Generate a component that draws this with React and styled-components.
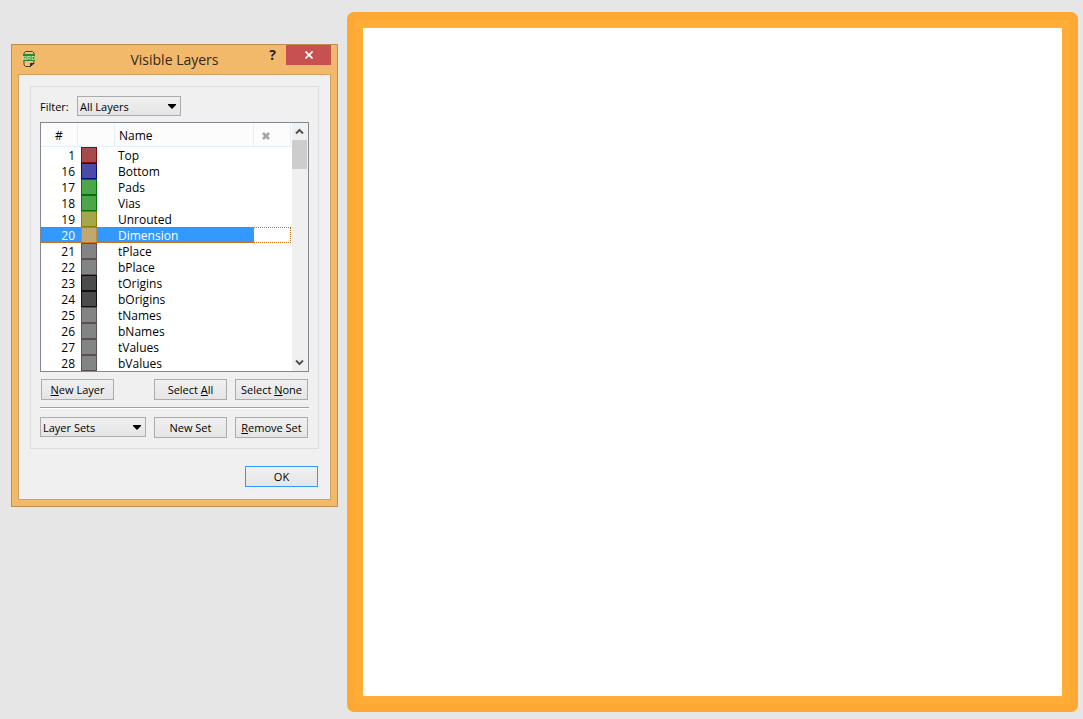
import React, { useState } from "react";
import styled, { createGlobalStyle, css } from "styled-components";

const GlobalStyle = createGlobalStyle`
  *, *::before, *::after { box-sizing: border-box; }
  body {
    margin: 0;
    background: #e6e6e6;
    color: #000;
    font: 11px/16px "Open Sans", "Noto Sans", sans-serif;
  }
`;

const Page = styled.main`
  display: flex;
  gap: 9px;
  min-height: 100vh;
  padding: 12px 5px 7px 11px;
`;

const Dialog = styled.section`
  display: flex;
  flex-direction: column;
  flex: 0 0 327px;
  align-self: flex-start;
  margin-top: 32px;
  border: 1px solid #bd9050;
  background: #f3b96b;
`;

const TitleBar = styled.header`
  display: grid;
  grid-template-columns: 78px 1fr 78px;
  height: 29px;
`;

const AppIcon = styled.svg`
  width: 14px;
  height: 18px;
  margin: 5px 0 0 10px;
`;

const Title = styled.h1`
  margin: 0;
  color: #332819;
  font-size: 14px;
  font-weight: 400;
  line-height: 29px;
  text-align: center;
  white-space: nowrap;
`;

const WindowButtons = styled.div`
  display: flex;
  height: 20px;
  padding-right: 6px;
`;

const WindowButton = styled.button`
  flex: 1;
  padding: 0;
  border: 0;
  background: transparent;
  color: #222;
  font: 700 14px/20px "Open Sans", sans-serif;
  ${(p) =>
    p.$close &&
    css`
      display: grid;
      place-items: center;
      flex: 0 0 45px;
      background: #c75050;
      color: #fff;
    `}
`;

const Body = styled.div`
  display: flex;
  flex-direction: column;
  margin: 0 6px 6px;
  padding: 11px 11px 12px;
  border: 1px solid #d3a15f;
  background: #f0f0f0;
`;

const Group = styled.div`
  display: flex;
  flex-direction: column;
  padding: 9px 9px 10px;
  border: 1px solid #dcdcdc;
`;

const FilterRow = styled.div`
  display: flex;
  align-items: center;
  height: 20px;
  margin-bottom: 6px;
`;

const FilterLabel = styled.label`
  flex: 0 0 37px;
  padding-top: 2px;
`;

const SelectBox = styled.div`
  position: relative;
  width: ${(p) => p.$width}px;
  height: 20px;
`;

const Select = styled.select`
  appearance: none;
  width: 100%;
  height: 100%;
  padding: 1px 16px 0 2px;
  border: 1px solid #acacac;
  border-radius: 0;
  background: linear-gradient(#f0f0f0, #e5e5e5);
  color: #000;
  font: inherit;
`;

const SelectArrow = styled.svg`
  position: absolute;
  top: 8px;
  right: 5px;
  width: 8px;
  height: 5px;
  pointer-events: none;
`;

const ListBox = styled.div`
  display: flex;
  border: 1px solid #828790;
  background: #fff;
`;

const LayerTable = styled.table`
  flex: 1;
  table-layout: fixed;
  width: 0;
  margin-right: 1px;
  border-spacing: 0;
  font-size: 12px;
`;

const HeadCell = styled.th`
  width: ${(p) => (p.$width ? `${p.$width}px` : "auto")};
  height: 24px;
  padding: 2px 4px 0;
  border-right: 1px solid #e3effb;
  border-bottom: 1px solid #e3effb;
  background: #fcfcfc;
  font-weight: 400;
  line-height: 16px;
  text-align: ${(p) => p.$align || "left"};

  svg { margin-left: 4px; }
`;

const LayerRow = styled.tr`
  height: 16px;
  cursor: default;
  ${(p) =>
    p.$selected &&
    css`
      color: #fff;
      outline: 1px dotted #c46a10;
      outline-offset: -1px;
      td:not(:last-child) { background: #3399ff; }
    `}
`;

const Cell = styled.td`
  height: 16px;
  padding: 0 3px;
  line-height: 16px;
`;

const TextCell = styled(Cell)`
  padding: 2px 3px 0;
  line-height: 14px;
`;

const NumberCell = styled(TextCell)`
  padding-left: 0;
  text-align: right;
`;

const Swatch = styled.div`
  width: 16px;
  height: 16px;
  border: 1px solid ${(p) => p.$edge};
  background: ${(p) => p.$fill};
`;

const ScrollTrack = styled.div`
  display: flex;
  flex-direction: column;
  flex: 0 0 16px;
  background: #f0f0f0;
`;

const ScrollButton = styled.button`
  display: grid;
  place-items: center;
  height: 17px;
  padding: 0 1px 0 0;
  border: 0;
  background: transparent;
`;

const ScrollThumb = styled.div`
  height: 29px;
  margin-right: 1px;
  margin-bottom: auto;
  background: #cdcdcd;
`;

const ButtonRow = styled.div`
  display: flex;
  align-items: flex-start;
  justify-content: flex-end;
  gap: 8px;
  margin-top: ${(p) => p.$top}px;
  padding: 0 1px 0 ${(p) => (p.$flush ? 0 : 1)}px;
`;

const PushButton = styled.button`
  width: 73px;
  height: 21px;
  margin-right: ${(p) => (p.$pushed ? "auto" : "0")};
  padding: 1px 0 0;
  border: 1px solid ${(p) => (p.$default ? "#3399ff" : "#acacac")};
  background: linear-gradient(#f0f0f0, #e5e5e5);
  color: #000;
  font: inherit;
  white-space: nowrap;
`;

const Separator = styled.hr`
  width: 100%;
  height: 2px;
  margin: 7px 0 0;
  border: 0;
  border-top: 1px solid #a0a0a0;
  background: #fff;
`;

const Board = styled.section`
  flex: 1;
  min-width: 0;
  border: 8px solid #fba933;
  border-radius: 7px;
  background: #fff;
  box-shadow: inset 0 0 0 8px #ffad37;
`;

const red = ["#a64b4b", "#850a0a"];
const blue = ["#4b4ba6", "#0a0a85"];
const green = ["#4ba64b", "#0a700a"];
const olive = ["#a6a64b", "#85800a"];
const tan = ["#c0a870", "#b78b43"];
const grey = ["#848484", "#5c5058"];
const dark = ["#4b4b4b", "#101010"];

const layers = [
  [1, "Top", red],
  [16, "Bottom", blue],
  [17, "Pads", green],
  [18, "Vias", green],
  [19, "Unrouted", olive],
  [20, "Dimension", tan],
  [21, "tPlace", grey],
  [22, "bPlace", grey],
  [23, "tOrigins", dark],
  [24, "bOrigins", dark],
  [25, "tNames", grey],
  [26, "bNames", grey],
  [27, "tValues", grey],
  [28, "bValues", grey],
];

function DropDown({ width, option, ...rest }) {
  return (
    <SelectBox $width={width}>
      <Select {...rest}>
        <option>{option}</option>
      </Select>
      <SelectArrow viewBox="0 0 8 5" aria-hidden="true">
        <path d="M0 0h8v1L4 5 0 1z" />
      </SelectArrow>
    </SelectBox>
  );
}

function Chevron({ down }) {
  return (
    <svg width="9" height="7" viewBox="0 0 9 7" aria-hidden="true">
      <path
        d={down ? "M1 1.5 4.500 5 8 1.500" : "M1 5.500 4.500 2 8 5.500"}
        fill="none"
        stroke="#555"
        strokeWidth="2"
      />
    </svg>
  );
}

export default function App() {
  const [selected, setSelected] = useState(20);

  return (
    <>
      <GlobalStyle />
      <Page>
        <Dialog role="dialog" aria-labelledby="dialog-title">
          <TitleBar>
            <AppIcon viewBox="0 0 14 18" aria-hidden="true">
              <path
                d="M3.500 1.500h7l1.500 1.500v9L8.500 16.500H3.500L2 15V3z"
                fill="#efc07c"
                stroke="#50452f"
              />
              <path d="M8 17v-4h5z" fill="#383225" />
              <rect x="1" y="4" width="12" height="7" rx="1" fill="#298a35" />
              <text
                x="7"
                y="10"
                fill="#c4efbe"
                fontSize="6"
                fontWeight="700"
                fontFamily="Liberation Sans, sans-serif"
                textAnchor="middle"
              >
                BRD
              </text>
            </AppIcon>
            <Title id="dialog-title">Visible Layers</Title>
            <WindowButtons>
              <WindowButton type="button" aria-label="Help">?</WindowButton>
              <WindowButton type="button" aria-label="Close" $close>
                <svg width="8" height="8" viewBox="0 0 8 8" aria-hidden="true">
                  <path d="M.5.5l7 7M7.500.5l-7 7" stroke="#fff" strokeWidth="1.700" />
                </svg>
              </WindowButton>
            </WindowButtons>
          </TitleBar>

          <Body>
            <Group>
              <FilterRow>
                <FilterLabel htmlFor="filter">Filter:</FilterLabel>
                <DropDown id="filter" width={104} option="All Layers" />
              </FilterRow>

              <ListBox>
                <LayerTable>
                  <thead>
                    <tr>
                      <HeadCell $width={37} $align="center">#</HeadCell>
                      <HeadCell $width={37} aria-label="Color" />
                      <HeadCell>Name</HeadCell>
                      <HeadCell $width={37} aria-label="Used">
                        <svg width="8" height="8" viewBox="0 0 8 8" aria-hidden="true">
                          <path d="M1 1l6 6M7 1L1 7" stroke="#a3a3a3" strokeWidth="2.500" />
                        </svg>
                      </HeadCell>
                    </tr>
                  </thead>
                  <tbody>
                    {layers.map(([number, name, [fill, edge]]) => (
                      <LayerRow
                        key={number}
                        $selected={number === selected}
                        onClick={() => setSelected(number)}
                      >
                        <NumberCell>{number}</NumberCell>
                        <Cell>
                          <Swatch $fill={fill} $edge={edge} />
                        </Cell>
                        <TextCell>{name}</TextCell>
                        <Cell />
                      </LayerRow>
                    ))}
                  </tbody>
                </LayerTable>
                <ScrollTrack>
                  <ScrollButton type="button" aria-label="Scroll up">
                    <Chevron />
                  </ScrollButton>
                  <ScrollThumb />
                  <ScrollButton type="button" aria-label="Scroll down">
                    <Chevron down />
                  </ScrollButton>
                </ScrollTrack>
              </ListBox>

              <ButtonRow $top={7}>
                <PushButton type="button" $pushed>
                  <u>N</u>ew Layer
                </PushButton>
                <PushButton type="button">
                  Select <u>A</u>ll
                </PushButton>
                <PushButton type="button">
                  Select <u>N</u>one
                </PushButton>
              </ButtonRow>

              <Separator />

              <ButtonRow $top={8} $flush>
                <DropDown width={106} option="Layer Sets" aria-label="Layer Sets" />
                <PushButton type="button">New Set</PushButton>
                <PushButton type="button">
                  <u>R</u>emove Set
                </PushButton>
              </ButtonRow>
            </Group>

            <ButtonRow $top={17}>
              <PushButton type="button" $default>
                OK
              </PushButton>
            </ButtonRow>
          </Body>
        </Dialog>

        <Board aria-label="Board" />
      </Page>
    </>
  );
}
